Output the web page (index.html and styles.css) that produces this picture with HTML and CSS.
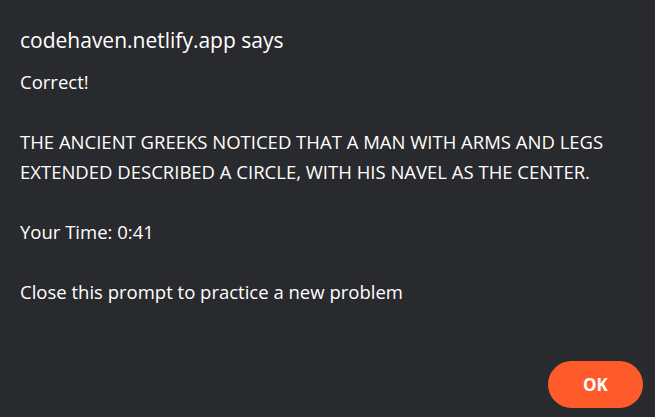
FILE: index.html
```html
<!DOCTYPE html>
<html>
<head>
<meta charset="utf-8">
<link rel="stylesheet" href="styles.css">
</head>
<body>
<div class="dialog">
  <h1 class="title">codehaven.netlify.app says</h1>
  <div class="message">
    <p class="line">Correct!</p>
    <p class="line">THE ANCIENT GREEKS NOTICED THAT A MAN WITH ARMS AND LEGS EXTENDED DESCRIBED A CIRCLE, WITH HIS NAVEL AS THE CENTER.</p>
    <p class="line">Your Time: 0:41</p>
    <p class="line">Close this prompt to practice a new problem</p>
  </div>
  <div class="actions">
    <button class="ok">OK</button>
  </div>
</div>
</body>
</html>
```
FILE: styles.css
```css
html, body {
  margin: 0;
  padding: 0;
  background: #292a2d;
  height: 100%;
}
.dialog {
  box-sizing: border-box;
  width: 655px;
  height: 417px;
  padding: 25px 12px 9px 20px;
  display: flex;
  flex-direction: column;
  font-family: "Open Sans", "Noto Sans", sans-serif;
  color: #ffffff;
}
.title {
  margin: 0;
  font-size: 21px;
  font-weight: 400;
  line-height: 30px;
}
.message {
  margin-top: 12px;
  font-size: 18.5px;
  line-height: 30px;
  width: 620px;
}
.line {
  margin: 0 0 30px 0;
}
.line:last-child {
  margin-bottom: 0;
}
.actions {
  margin-top: auto;
  display: flex;
  justify-content: flex-end;
}
.ok {
  width: 95px;
  height: 47px;
  border: none;
  border-radius: 24px;
  background: #ff5a2a;
  color: #ffffff;
  font-family: "Open Sans", "Noto Sans", sans-serif;
  font-weight: 700;
  font-size: 17px;
}
```
